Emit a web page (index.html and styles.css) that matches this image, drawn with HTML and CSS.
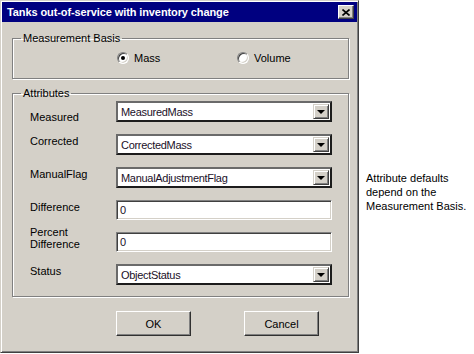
FILE: index.html
```html
<!DOCTYPE html>
<html>
<head>
<meta charset="utf-8">
<link rel="stylesheet" href="styles.css">
</head>
<body>
<div class="page">
  <div class="dialog">
    <div class="titlebar">
      <span class="title">Tanks out-of-service with inventory change</span>
      <span class="close">
        <svg width="8" height="7" viewBox="0 0 8 7"><path d="M0.5 0.5 L7.5 6.5 M7.5 0.5 L0.5 6.5" stroke="#000" stroke-width="1.6" fill="none"/></svg>
      </span>
    </div>
    <fieldset class="group basis">
      <legend>Measurement Basis</legend>
      <div class="radios">
        <span class="radio-item first"><span class="radio checked"></span>Mass</span>
        <span class="radio-item"><span class="radio"></span>Volume</span>
      </div>
    </fieldset>
    <fieldset class="group attrs">
      <legend>Attributes</legend>
      <div class="fields">
        <div class="row">
          <span class="label low">Measured</span>
          <div class="combo"><span class="value">MeasuredMass</span><span class="drop"><span class="arrow"></span></span></div>
        </div>
        <div class="row">
          <span class="label">Corrected</span>
          <div class="combo"><span class="value">CorrectedMass</span><span class="drop"><span class="arrow"></span></span></div>
        </div>
        <div class="row">
          <span class="label">ManualFlag</span>
          <div class="combo"><span class="value">ManualAdjustmentFlag</span><span class="drop"><span class="arrow"></span></span></div>
        </div>
        <div class="row short">
          <span class="label">Difference</span>
          <div class="text"><span class="value">0</span></div>
        </div>
        <div class="row short">
          <span class="label two">Percent<br>Difference</span>
          <div class="text"><span class="value">0</span></div>
        </div>
        <div class="row">
          <span class="label">Status</span>
          <div class="combo"><span class="value">ObjectStatus</span><span class="drop"><span class="arrow"></span></span></div>
        </div>
      </div>
    </fieldset>
    <div class="buttons">
      <span class="button">OK</span>
      <span class="button">Cancel</span>
    </div>
  </div>
  <div class="note">Attribute defaults<br>depend on the<br>Measurement Basis.</div>
</div>
</body>
</html>
```
FILE: styles.css
```css
html, body {
  margin: 0;
  padding: 0;
  background: #ffffff;
}
body {
  font-family: "Liberation Sans", Arial, sans-serif;
  font-size: 11px;
  color: #000;
}
.page {
  display: flex;
  align-items: flex-start;
}
.dialog {
  width: 359px;
  height: 353px;
  box-sizing: border-box;
  background: #d4d0c8;
  border: 1px solid;
  border-color: #d4d0c8 #404040 #404040 #d4d0c8;
  box-shadow: inset 1px 1px #ffffff, inset -1px -1px #808080;
  padding: 1px;
  display: flex;
  flex-direction: column;
}
.titlebar {
  height: 20px;
  background: #000080;
  display: flex;
  align-items: center;
  justify-content: space-between;
  padding: 0 3px 0 5px;
}
.title {
  color: #fff;
  font-weight: bold;
  font-size: 11px;
  letter-spacing: -0.1px;
}
.close {
  width: 16px;
  height: 14px;
  box-sizing: border-box;
  background: #d4d0c8;
  border: 1px solid;
  border-color: #ffffff #404040 #404040 #ffffff;
  box-shadow: inset -1px -1px #808080;
  display: flex;
  align-items: center;
  justify-content: center;
}
.group {
  margin: 0 8px 0 10px;
  padding: 0;
  border: 1px solid #808080;
  box-shadow: 1px 1px 0 #ffffff, inset 1px 1px 0 #ffffff;
  min-width: 0;
}
.group legend {
  margin-left: 8px;
  padding: 0 2px;
  line-height: 13px;
  font-size: 11px;
}
.basis {
  margin-top: 10px;
  padding: 6px 0 13px 0;
}
.radios {
  display: flex;
  padding-left: 104px;
  height: 14px;
  align-items: center;
}
.radio-item {
  display: flex;
  align-items: center;
  gap: 5px;
}
.radio-item.first {
  width: 120px;
}
.radio {
  width: 12px;
  height: 12px;
  box-sizing: border-box;
  border-radius: 50%;
  background: #fff;
  border: 1px solid;
  border-color: #808080 #ffffff #ffffff #808080;
  box-shadow: inset 1px 1px #404040, inset -1px -1px #d4d0c8;
  display: flex;
  align-items: center;
  justify-content: center;
}
.radio.checked::after {
  content: "";
  width: 4px;
  height: 4px;
  border-radius: 50%;
  background: #000;
}
.attrs {
  margin-top: 8px;
  padding: 1px 0 11px 0;
}
.fields {
  padding: 0 15px 0 17px;
  display: flex;
  flex-direction: column;
  gap: 12px;
}
.row {
  display: flex;
  align-items: flex-start;
  height: 21px;
}
.row.short {
  height: 20px;
}
.label {
  width: 86px;
  line-height: 13px;
  padding-top: 1px;
  flex: none;
}
.label.low {
  padding-top: 10px;
}
.label.two {
  line-height: 12px;
  margin-top: -6px;
  padding-top: 0;
}
.combo, .text {
  width: 216px;
  box-sizing: border-box;
  background: #fff;
  display: flex;
  align-items: center;
}
.combo {
  height: 21px;
  border: 2px solid;
  border-color: #6a6a6a #1c1c1c #1c1c1c #6a6a6a;
  padding-right: 1px;
}
.text {
  height: 20px;
  border: 1px solid;
  border-color: #808080 #ffffff #ffffff #808080;
  box-shadow: inset 1px 1px #404040, inset -1px -1px #d4d0c8;
}
.value {
  flex: 1;
  padding-left: 3px;
  font-size: 11px;
  letter-spacing: -0.3px;
  color: #1a1028;
}
.drop {
  width: 16px;
  height: 15px;
  box-sizing: border-box;
  background: #d4d0c8;
  border: 1px solid;
  border-color: #d4d0c8 #404040 #404040 #d4d0c8;
  box-shadow: inset 1px 1px #ffffff, inset -1px -1px #808080;
  display: flex;
  align-items: center;
  justify-content: center;
}
.arrow {
  width: 0;
  height: 0;
  border-left: 4px solid transparent;
  border-right: 4px solid transparent;
  border-top: 4px solid #000;
}
.buttons {
  display: flex;
  gap: 53px;
  padding-left: 114px;
  margin-top: 14px;
}
.button {
  width: 75px;
  height: 25px;
  box-sizing: border-box;
  border: 1px solid;
  border-color: #ffffff #303030 #303030 #ffffff;
  box-shadow: inset -1px -1px #808080;
  display: flex;
  align-items: center;
  justify-content: center;
  font-size: 11px;
}
.note {
  margin-top: 171px;
  margin-left: 7px;
  font-family: "Liberation Sans", Arial, sans-serif;
  font-size: 11px;
  line-height: 14px;
  color: #000;
}
```
